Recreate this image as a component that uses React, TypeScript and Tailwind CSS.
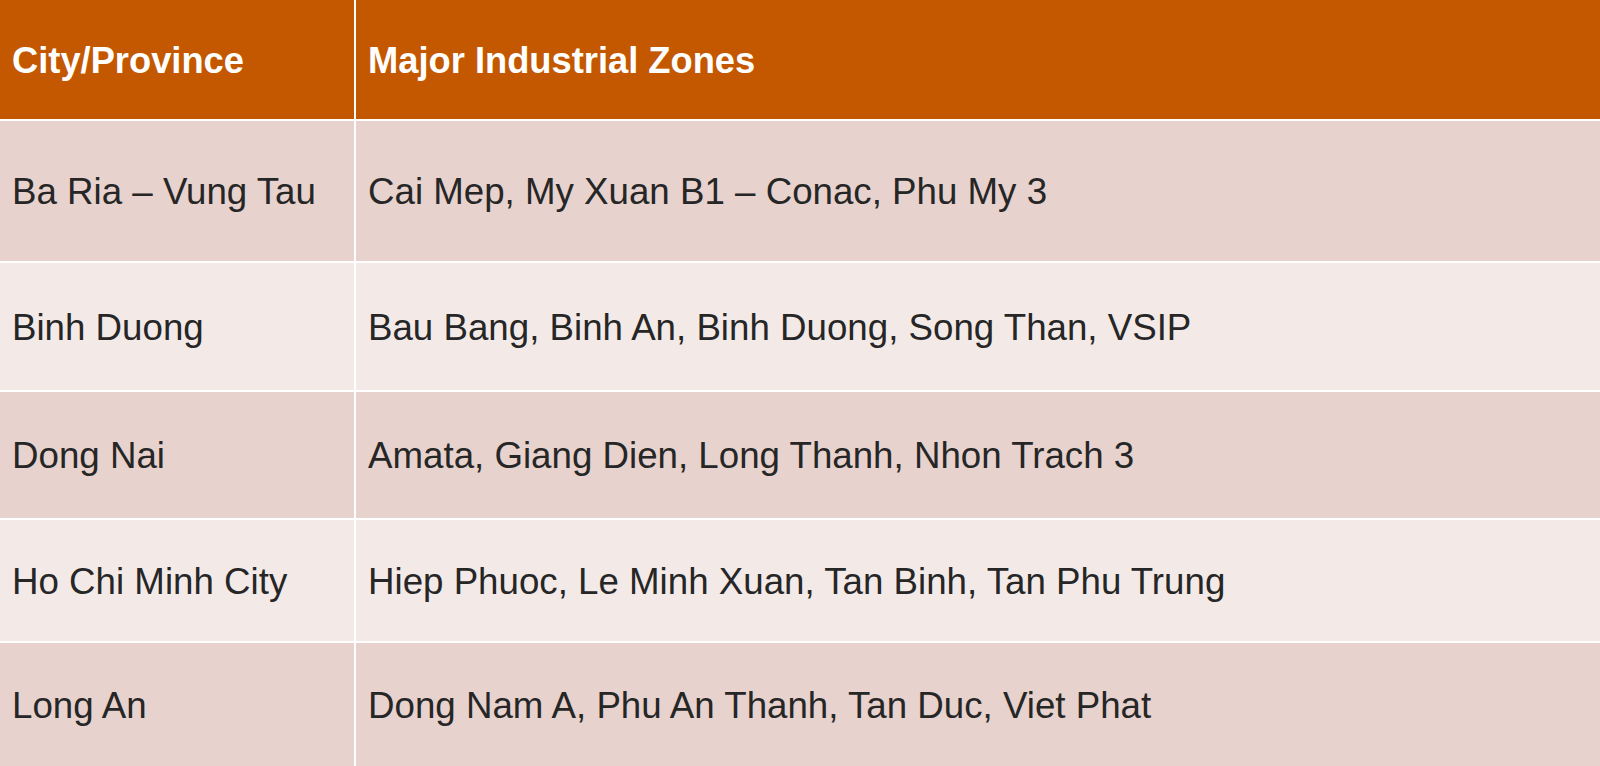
import React from "react";

const rows = [
  { city: "Ba Ria – Vung Tau", zones: "Cai Mep, My Xuan B1 – Conac, Phu My 3" },
  { city: "Binh Duong", zones: "Bau Bang, Binh An, Binh Duong, Song Than, VSIP" },
  { city: "Dong Nai", zones: "Amata, Giang Dien, Long Thanh, Nhon Trach 3" },
  { city: "Ho Chi Minh City", zones: "Hiep Phuoc, Le Minh Xuan, Tan Binh, Tan Phu Trung" },
  { city: "Long An", zones: "Dong Nam A, Phu An Thanh, Tan Duc, Viet Phat" },
];

export default function App() {
  return (
    <div
      className="h-[766px] w-[1600px] overflow-hidden bg-white text-[36.7px] leading-none text-[#262626]"
      style={{ fontFamily: '"Liberation Sans", Arial, sans-serif' }}
    >
      {/* Table: white gaps act as the cell borders */}
      <div className="grid h-full grid-cols-[354px_1fr] grid-rows-[119px_140px_127px_126px_121px_1fr] gap-[2px]">
        <div className="flex items-center bg-[#c45800] pl-3 pt-[3px] text-[36.3px] font-bold text-white">City/Province</div>
        <div className="flex items-center bg-[#c45800] pl-3 pt-[3px] text-[36.3px] font-bold text-white">Major Industrial Zones</div>

        {rows.map((row, i) => {
          const bg = i % 2 === 0 ? "bg-[#e7d2cd]" : "bg-[#f3eae8]";
          return (
            <React.Fragment key={row.city}>
              <div className={`flex items-center pl-3 pt-[3px] ${bg}`}>{row.city}</div>
              <div className={`flex items-center pl-3 pt-[3px] ${bg}`}>{row.zones}</div>
            </React.Fragment>
          );
        })}
      </div>
    </div>
  );
}
